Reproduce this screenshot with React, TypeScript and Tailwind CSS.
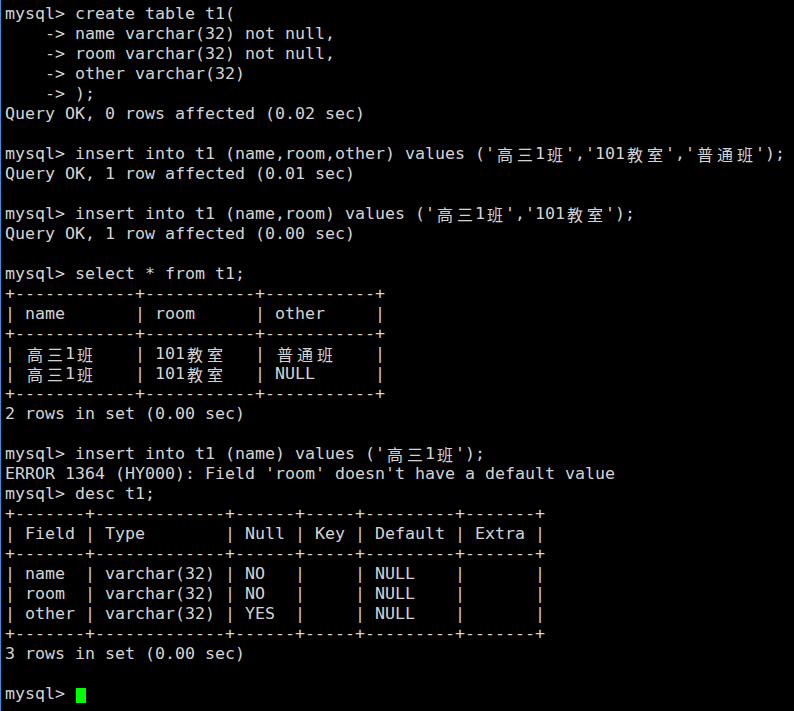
import React from "react";

const lines: string[] = [
  "mysql> create table t1(",
  "    -> name varchar(32) not null,",
  "    -> room varchar(32) not null,",
  "    -> other varchar(32)",
  "    -> );",
  "Query OK, 0 rows affected (0.02 sec)",
  "",
  "mysql> insert into t1 (name,room,other) values ('高三1班','101教室','普通班');",
  "Query OK, 1 row affected (0.01 sec)",
  "",
  "mysql> insert into t1 (name,room) values ('高三1班','101教室');",
  "Query OK, 1 row affected (0.00 sec)",
  "",
  "mysql> select * from t1;",
  "+------------+-----------+-----------+",
  "| name       | room      | other     |",
  "+------------+-----------+-----------+",
  "| 高三1班    | 101教室   | 普通班    |",
  "| 高三1班    | 101教室   | NULL      |",
  "+------------+-----------+-----------+",
  "2 rows in set (0.00 sec)",
  "",
  "mysql> insert into t1 (name) values ('高三1班');",
  "ERROR 1364 (HY000): Field 'room' doesn't have a default value",
  "mysql> desc t1;",
  "+-------+-------------+------+-----+---------+-------+",
  "| Field | Type        | Null | Key | Default | Extra |",
  "+-------+-------------+------+-----+---------+-------+",
  "| name  | varchar(32) | NO   |     | NULL    |       |",
  "| room  | varchar(32) | NO   |     | NULL    |       |",
  "| other | varchar(32) | YES  |     | NULL    |       |",
  "+-------+-------------+------+-----+---------+-------+",
  "3 rows in set (0.00 sec)",
  "",
];

const isCJK = (c: string) => /[\u3000-\u9fff\uff00-\uffef]/.test(c);

function Line({ text }: { text: string }) {
  const parts: React.ReactNode[] = [];
  let buf = "";
  let key = 0;
  for (const ch of text) {
    if (isCJK(ch)) {
      if (buf) {
        parts.push(<span key={key++}>{buf}</span>);
        buf = "";
      }
      parts.push(
        <span
          key={key++}
          className="inline-block h-[20px] w-[20px] text-center align-top font-['Noto_Sans_CJK_SC',sans-serif] text-[16px] leading-[20px]"
        >
          {ch}
        </span>
      );
    } else {
      buf += ch;
    }
  }
  if (buf) parts.push(<span key={key++}>{buf}</span>);
  return (
    <div className="h-[20px] whitespace-pre leading-[20px]">
      {parts.length ? parts : " "}
    </div>
  );
}

export default function App() {
  return (
    <div className="h-[711px] w-[794px] overflow-hidden bg-black">
      <div className="h-full border-l-[1px] border-[#3c8fe0] pl-[4px] pt-[4px] font-['DejaVu_Sans_Mono',monospace] text-[16.61px] text-[#d4d4d4]">
        {lines.map((l, i) => (
          <Line key={i} text={l} />
        ))}
        <div className="flex h-[20px] items-center whitespace-pre leading-[20px]">
          <span>mysql&gt; </span>
          <span className="ml-[1px] mt-[2px] inline-block h-[15px] w-[10px] bg-[#00ff00]" />
        </div>
      </div>
    </div>
  );
}
